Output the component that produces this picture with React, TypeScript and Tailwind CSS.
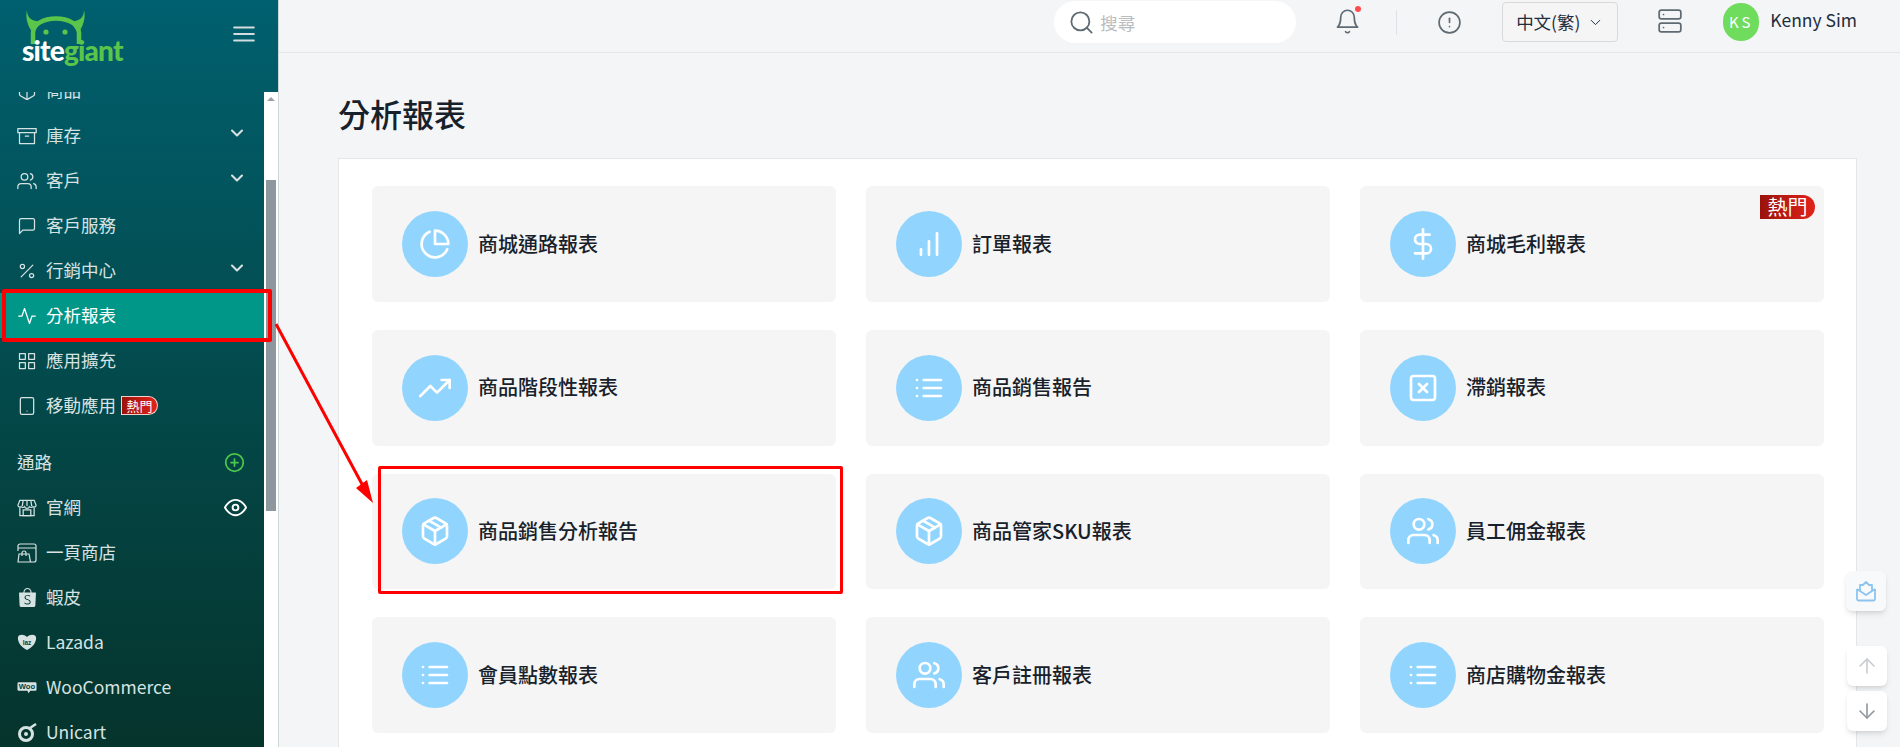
import React from "react";
import {
  FiActivity,
  FiAlertCircle,
  FiArchive,
  FiArrowDown,
  FiArrowUp,
  FiBarChart,
  FiBell,
  FiChevronDown,
  FiDollarSign,
  FiEye,
  FiGrid,
  FiList,
  FiMenu,
  FiMessageSquare,
  FiPackage,
  FiPercent,
  FiPieChart,
  FiPlusCircle,
  FiSearch,
  FiServer,
  FiTablet,
  FiTrendingUp,
  FiUsers,
  FiXSquare,
} from "react-icons/fi";
import { SiShopee } from "react-icons/si";

function Logo() {
  return (
    <div className="relative h-[60px] w-[130px]">
      <svg width="110" height="46" viewBox="0 0 110 46" className="absolute left-0 top-0" fill="none">
        <path d="M33 44 V33 C33 24 44 18.5 56 18.5 C68 18.5 79 24 79 33 V44" stroke="#5ac54a" strokeWidth="4.5" />
        <path d="M27 10 C27 17 31 22 41 21 L33 33 C28 27 25 18 27 10 Z" fill="#5ac54a" />
        <path d="M84 10 C84 17 80 22 70 21 L78 33 C83 27 86 18 84 10 Z" fill="#5ac54a" />
        <circle cx="46" cy="32" r="2.6" fill="#5ac54a" />
        <circle cx="65" cy="32" r="2.6" fill="#5ac54a" />
      </svg>
      <div className="absolute left-[22px] top-[33px] flex font-['Lato',sans-serif] text-[28px] font-black leading-[34px] tracking-[-0.8px]">
        <span className="text-white">site</span>
        <span className="text-[#5ac54a]">giant</span>
      </div>
    </div>
  );
}

function HotBadge({ small }: { small?: boolean }) {
  return (
    <span
      className={
        small
          ? "ml-[-4px] flex h-[19px] w-[37px] items-center justify-center rounded-l-[8px] rounded-r-full border border-white/80 bg-gradient-to-r from-[#9a130b] to-[#e2231a] text-[13px] leading-none text-white"
          : "absolute right-[9px] top-[9px] flex h-[24px] w-[55px] items-center justify-center rounded-tl-[14px] rounded-r-full bg-gradient-to-r from-[#9a130b] to-[#e2231a] text-[20px] leading-none text-white"
      }
    >
      熱門
    </span>
  );
}

function StoreIcon() {
  return (
    <svg width="21" height="20" viewBox="0 0 21 20" fill="none" stroke="currentColor" strokeWidth="1.3">
      <path d="M3 2h15l2 5a2 2 0 0 1-3.2 1.6A2.6 2.6 0 0 1 13 8.6a2.6 2.6 0 0 1-5 0 2.6 2.6 0 0 1-3.8 0A2 2 0 0 1 1 7z" />
      <path d="M6.5 2l-1 6M10.5 2v6M14.5 2l1 6" />
      <path d="M3 10v8h15v-8" />
      <rect x="6.5" y="12" width="8" height="6" />
    </svg>
  );
}

function OnePageIcon() {
  return (
    <svg width="20" height="20" viewBox="0 0 20 20" fill="none" stroke="currentColor" strokeWidth="1.2">
      <path d="M1 8V3a2 2 0 0 1 2-2h14a2 2 0 0 1 2 2v14a2 2 0 0 1-2 2h-3M1 5h18" />
      <path d="M2 11h10l1.5 8H1z" />
      <path d="M5 13v-3a2 2 0 0 1 4 0v3" />
    </svg>
  );
}

function LazadaIcon() {
  return (
    <svg width="20" height="18" viewBox="0 0 20 18">
      <path d="M10 3 C7 0 2 0 1 3 C0 8 5 14 10 16 C15 14 20 8 19 3 C18 0 13 0 10 3 Z" fill="currentColor" />
      <text x="10" y="10.5" textAnchor="middle" fontSize="6.5" fontWeight="700" fill="#034440" fontFamily="Liberation Sans, sans-serif">
        laz
      </text>
    </svg>
  );
}

function WooIcon() {
  return (
    <svg width="21" height="13" viewBox="0 0 21 13">
      <path d="M2 1h17a1.5 1.5 0 0 1 1.5 1.5v6A1.5 1.5 0 0 1 19 10h-5l-2 2.5-1-2.5H2A1.5 1.5 0 0 1 .5 8.5v-6A1.5 1.5 0 0 1 2 1z" fill="currentColor" />
      <text x="10.5" y="8.3" textAnchor="middle" fontSize="8" fontWeight="700" fill="#03403a" fontFamily="Liberation Sans, sans-serif">
        Woo
      </text>
    </svg>
  );
}

function UnicartIcon() {
  return (
    <svg width="20" height="20" viewBox="0 0 20 20" fill="none">
      <circle cx="9" cy="11" r="6.5" stroke="currentColor" strokeWidth="3" />
      <circle cx="9" cy="11" r="2" fill="currentColor" />
      <path d="M13 5 L19 1" stroke="currentColor" strokeWidth="2.5" />
    </svg>
  );
}

const navTop = [
  { label: "商品", icon: <FiPackage size={20} strokeWidth={1.5} />, arrow: true },
  { label: "庫存", icon: <FiArchive size={20} strokeWidth={1.5} />, arrow: true },
  { label: "客戶", icon: <FiUsers size={20} strokeWidth={1.5} />, arrow: true },
  { label: "客戶服務", icon: <FiMessageSquare size={20} strokeWidth={1.5} /> },
  { label: "行銷中心", icon: <FiPercent size={20} strokeWidth={1.5} />, arrow: true },
  { label: "分析報表", icon: <FiActivity size={20} strokeWidth={1.5} />, active: true },
  { label: "應用擴充", icon: <FiGrid size={20} strokeWidth={1.5} /> },
  { label: "移動應用", icon: <FiTablet size={20} strokeWidth={1.5} />, hot: true },
];

const channels = [
  { label: "官網", icon: <StoreIcon />, eye: true },
  { label: "一頁商店", icon: <OnePageIcon /> },
  { label: "蝦皮", icon: <SiShopee size={19} /> },
  { label: "Lazada", icon: <LazadaIcon /> },
  { label: "WooCommerce", icon: <WooIcon /> },
  { label: "Unicart", icon: <UnicartIcon /> },
];

const reports = [
  { label: "商城通路報表", icon: <FiPieChart size={32} /> },
  { label: "訂單報表", icon: <FiBarChart size={32} /> },
  { label: "商城毛利報表", icon: <FiDollarSign size={32} />, hot: true },
  { label: "商品階段性報表", icon: <FiTrendingUp size={32} /> },
  { label: "商品銷售報告", icon: <FiList size={32} /> },
  { label: "滯銷報表", icon: <FiXSquare size={32} /> },
  { label: "商品銷售分析報告", icon: <FiPackage size={32} /> },
  { label: "商品管家SKU報表", icon: <FiPackage size={32} /> },
  { label: "員工佣金報表", icon: <FiUsers size={32} /> },
  { label: "會員點數報表", icon: <FiList size={32} /> },
  { label: "客戶註冊報表", icon: <FiUsers size={32} /> },
  { label: "商店購物金報表", icon: <FiList size={32} /> },
];

function Sidebar() {
  return (
    <aside className="flex h-full w-[278px] shrink-0 flex-col bg-gradient-to-b from-[#00606f] via-[#034a4c] to-[#05342c]">
      {/* Logo */}
      <div className="flex h-[92px] shrink-0 items-start justify-between pr-[21px]">
        <Logo />
        <FiMenu size={26} className="mt-[21px] text-[#d3dcdf]" />
      </div>

      <div className="flex min-h-0 flex-1">
        <nav className="min-w-0 flex-1 overflow-hidden text-[17.5px] text-[#d7e3e3]">
          <ul className="-mt-[24px]">
            {navTop.map((item) => (
              <li
                key={item.label}
                className={
                  item.active
                    ? "flex h-[45px] items-center gap-[9px] bg-[#009688] pl-[17px] pr-[17px] text-white"
                    : "flex h-[45px] items-center gap-[9px] pl-[17px] pr-[17px]"
                }
              >
                {item.icon}
                <span>{item.label}</span>
                {item.hot && <HotBadge small />}
                {item.arrow && <FiChevronDown size={20} strokeWidth={2.5} className="-mt-[5px] ml-auto" />}
              </li>
            ))}
          </ul>

          <div className="mt-[12px] flex h-[45px] items-center justify-between pl-[17px] pr-[19px]">
            <span>通路</span>
            <FiPlusCircle size={21} className="text-[#4cc84c]" />
          </div>
          <ul>
            {channels.map((item) => (
              <li key={item.label} className="flex h-[45px] items-center gap-[9px] pl-[17px] pr-[17px]">
                <span className="flex w-[20px] justify-center">{item.icon}</span>
                <span>{item.label}</span>
                {item.eye && <FiEye size={23} className="ml-auto text-white" />}
              </li>
            ))}
          </ul>
        </nav>

        {/* Scrollbar */}
        <div className="flex w-[14px] shrink-0 flex-col items-center bg-white">
          <div className="mt-[5px] h-0 w-0 border-x-[4px] border-b-[4px] border-x-transparent border-b-[#9aa1a7]" />
          <div className="mt-[79px] h-[331px] w-[10px] bg-[#8f979e]" />
        </div>
      </div>
    </aside>
  );
}

function Header() {
  return (
    <header className="flex h-[53px] shrink-0 items-start border-b border-[#e4e6e8] pr-[43px] text-[#5f6b73]">
      <div className="ml-auto mt-[1px] flex h-[42px] w-[242px] items-center rounded-full bg-white pl-[14px]">
        <FiSearch size={27} strokeWidth={1.6} />
        <span className="ml-[5px] mt-[2px] text-[17.5px] text-[#b9bdc0]">搜尋</span>
      </div>
      <div className="relative ml-[38px] mt-[8px]">
        <FiBell size={27} strokeWidth={1.5} />
        <span className="absolute right-[0px] top-[-2px] h-[6px] w-[6px] rounded-full bg-[#ff4d4f]" />
      </div>
      <div className="ml-[35px] mt-[10px] h-[25px] w-px bg-[#dfe2e4]" />
      <FiAlertCircle size={25} strokeWidth={1.6} className="ml-[40px] mt-[10px]" />
      <button className="ml-[40px] mt-[2px] flex h-[40px] w-[116px] items-center justify-center gap-[7px] rounded-[4px] border border-[#d9d9d9] bg-[#f5f5f5] text-[17.5px] text-[#1f2d3d]">
        中文(繁)
        <FiChevronDown size={17} strokeWidth={1.4} />
      </button>
      <FiServer size={26} strokeWidth={1.6} className="ml-[39px] mt-[8px]" />
      <div className="ml-[40px] mt-[3px] flex h-[38px] w-[36px] items-center justify-center rounded-full bg-[#6fdc5e] text-[15px] tracking-[3px] text-white">
        KS
      </div>
      <span className="ml-[11px] mt-[7px] text-[17.5px] text-[#1f2d3d]">Kenny Sim</span>
    </header>
  );
}

function ReportCard({ label, icon, hot }: { label: string; icon: React.ReactNode; hot?: boolean }) {
  return (
    <div className="relative flex h-[115.75px] items-center gap-[10px] rounded-md bg-[#f5f5f5] pl-[30px]">
      <div className="flex h-[66px] w-[66px] items-center justify-center rounded-full bg-[#91d5ff] text-white">{icon}</div>
      <span className="-mt-[0.5px] text-[20px] font-medium text-[#17212b]">{label}</span>
      {hot && <HotBadge />}
    </div>
  );
}

export default function App() {
  return (
    <div className="relative flex h-[747px] w-[1900px] overflow-hidden bg-[#f4f5f7] font-['Noto_Sans_CJK_TC',sans-serif]">
      <Sidebar />
      <div className="w-px shrink-0 bg-[#cfd6da]" />

      <main className="flex min-w-0 flex-1 flex-col">
        <Header />
        <div className="pl-[59px] pr-[43px]">
          <h1 className="mt-[37px] h-[46px] text-[32px] font-medium leading-[46px] text-[#17212b]">分析報表</h1>
          <section className="mt-[22px] border border-[#e4e6e8] bg-white pb-[28px] pl-[33px] pr-[32px] pt-[27px]">
            <div className="grid grid-cols-3 gap-x-[30px] gap-y-[28px]">
              {reports.map((r) => (
                <ReportCard key={r.label} label={r.label} icon={r.icon} hot={r.hot} />
              ))}
            </div>
          </section>
        </div>
      </main>

      {/* Floating buttons */}
      <div className="absolute left-[1846px] top-[571px] flex h-[40px] w-[40px] items-center justify-center rounded-md bg-[#f7f9fb] shadow-md">
        <svg width="24" height="24" viewBox="0 0 24 24" fill="none" stroke="#8cc4f0" strokeWidth="1.8" strokeLinejoin="round">
          <path d="M3 10v10a1.5 1.5 0 0 0 1.5 1.5h15A1.5 1.5 0 0 0 21 20V10" />
          <path d="M3 10l9 6 9-6" />
          <path d="M6 12V6h3l3-3 3 3h3v6" />
        </svg>
      </div>
      <div className="absolute left-[1847px] top-[646px] flex h-[40px] w-[40px] items-center justify-center rounded-md bg-white text-[#c8ccd0] shadow-md">
        <FiArrowUp size={24} strokeWidth={1.6} />
      </div>
      <div className="absolute left-[1847px] top-[691px] flex h-[40px] w-[40px] items-center justify-center rounded-md bg-white text-[#8f979e] shadow-md">
        <FiArrowDown size={24} strokeWidth={1.6} />
      </div>

      {/* Red annotations */}
      <div className="absolute left-[2px] top-[289px] h-[53px] w-[270px] rounded-[2px] border-[4px] border-[#ff0000]" />
      <div className="absolute left-[378px] top-[466px] h-[128px] w-[465px] rounded-[2px] border-[3px] border-[#ff0000]" />
      <svg width="1900" height="747" className="pointer-events-none absolute left-0 top-0">
        <line x1="276" y1="324" x2="363" y2="486" stroke="#ff0000" strokeWidth="3" />
        <polygon points="373,503 356,488 367,480" fill="#ff0000" />
      </svg>
    </div>
  );
}
